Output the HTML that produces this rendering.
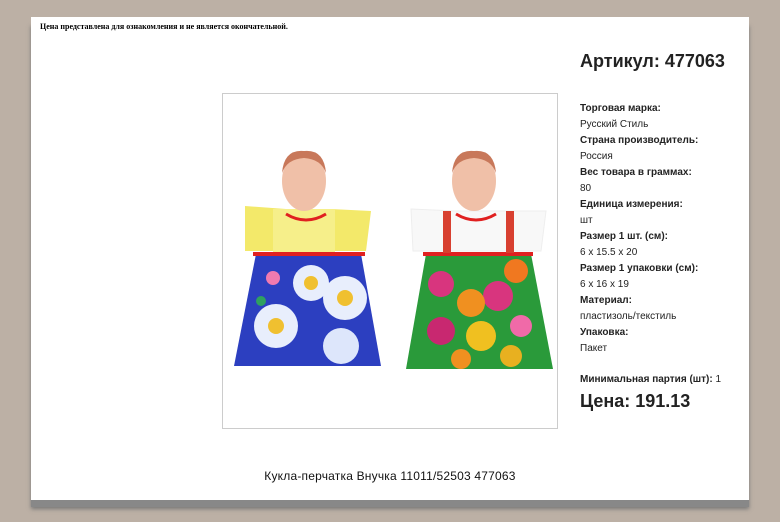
<!DOCTYPE html>
<html><head><meta charset="utf-8"><style>
body{margin:0;width:780px;height:522px;background:#bcb0a5;position:relative;overflow:hidden;font-family:"Liberation Sans",Arial,sans-serif}
.shadow{position:absolute;left:31px;top:24px;width:718px;height:483px;background:#888;box-shadow:0 2px 4px #777}
.page{position:absolute;left:31px;top:17px;width:718px;height:483px;background:#fff}
.note{position:absolute;left:40px;top:22px;font:bold 8px "Liberation Serif",serif;color:#000}
.art{position:absolute;left:580px;top:51px;font-weight:bold;font-size:18px;color:#222}
.spec{position:absolute;left:580px;top:101px;font-size:10px;color:#222;line-height:16px}
.spec b{font-weight:bold}
.min{position:absolute;left:580px;top:374px;font-size:10px;color:#222}
.price{position:absolute;left:580px;top:391px;font-weight:bold;font-size:18px;color:#222}
.img{position:absolute;left:222px;top:93px;width:334px;height:334px;border:1px solid #ccc;background:#fff}
.title{position:absolute;left:0;width:780px;text-align:center;top:469px;font-size:12px;color:#111;letter-spacing:0.2px}
</style></head><body>
<div class="shadow"></div>
<div class="page"></div>
<div class="note">Цена представлена для ознакомления и не является окончательной.</div>
<div class="art">Артикул: 477063</div>
<div class="spec"><b>Торговая марка:</b><br>Русский Стиль<br><b>Страна производитель:</b><br>Россия<br><b>Вес товара в граммах:</b><br>80<br><b>Единица измерения:</b><br>шт<br><b>Размер 1 шт. (см):</b><br>6 x 15.5 x 20<br><b>Размер 1 упаковки (см):</b><br>6 x 16 x 19<br><b>Материал:</b><br>пластизоль/текстиль<br><b>Упаковка:</b><br>Пакет</div>
<div class="min"><b>Минимальная партия (шт):</b> 1</div>
<div class="price">Цена: 191.13</div>
<div class="img">
<svg width="334" height="334" viewBox="222 93 334 334">
<polygon points="244,205 285,208 330,208 370,210 365,250 244,250" fill="#f3e96a"/>
<rect x="272" y="208" width="62" height="45" fill="#f6ef8a"/>
<polygon points="255,253 360,253 380,365 233,365" fill="#2c3fc0"/>
<circle cx="310" cy="282" r="18" fill="#e8eefc"/><circle cx="310" cy="282" r="7" fill="#f0c030"/>
<circle cx="344" cy="297" r="22" fill="#e8eefc"/><circle cx="344" cy="297" r="8" fill="#f0c030"/>
<circle cx="275" cy="325" r="22" fill="#e8eefc"/><circle cx="275" cy="325" r="8" fill="#f0c030"/>
<circle cx="340" cy="345" r="18" fill="#dde6fb"/>
<circle cx="272" cy="277" r="7" fill="#f07ab0"/><circle cx="260" cy="300" r="5" fill="#2fa060"/>
<rect x="252" y="251" width="112" height="4" fill="#e02020"/>
<path d="M285,213 Q305,225 325,213" stroke="#e02020" stroke-width="3" fill="none"/>
<ellipse cx="303" cy="180" rx="22" ry="30" fill="#f0c0a8"/>
<path d="M281,172 Q283,148 303,150 Q323,148 325,172 Q320,158 303,157 Q286,158 281,172Z" fill="#c8785a"/>
<polygon points="410,208 455,210 500,210 545,210 540,250 412,250" fill="#f8f8f8" stroke="#eee"/>
<polygon points="425,253 530,253 552,368 405,368" fill="#2a9a3a"/>
<circle cx="440" cy="283" r="13" fill="#d8357e"/><circle cx="497" cy="295" r="15" fill="#d8357e"/>
<circle cx="470" cy="302" r="14" fill="#f09020"/><circle cx="515" cy="270" r="12" fill="#f07820"/>
<circle cx="440" cy="330" r="14" fill="#c82870"/><circle cx="480" cy="335" r="15" fill="#f0c020"/>
<circle cx="520" cy="325" r="11" fill="#f06aa8"/><circle cx="460" cy="358" r="10" fill="#f09020"/>
<circle cx="510" cy="355" r="11" fill="#e8b020"/>
<rect x="422" y="251" width="110" height="4" fill="#e02020"/>
<rect x="442" y="210" width="8" height="42" fill="#d84030"/><rect x="505" y="210" width="8" height="42" fill="#d84030"/>
<path d="M455,213 Q475,225 495,213" stroke="#e02020" stroke-width="3" fill="none"/>
<ellipse cx="473" cy="180" rx="22" ry="30" fill="#f0c0a8"/>
<path d="M451,172 Q453,148 473,150 Q493,148 495,172 Q490,158 473,157 Q456,158 451,172Z" fill="#c8785a"/>
</svg>
</div>
<div class="title">Кукла-перчатка Внучка 11011/52503 477063</div>
</body></html>
